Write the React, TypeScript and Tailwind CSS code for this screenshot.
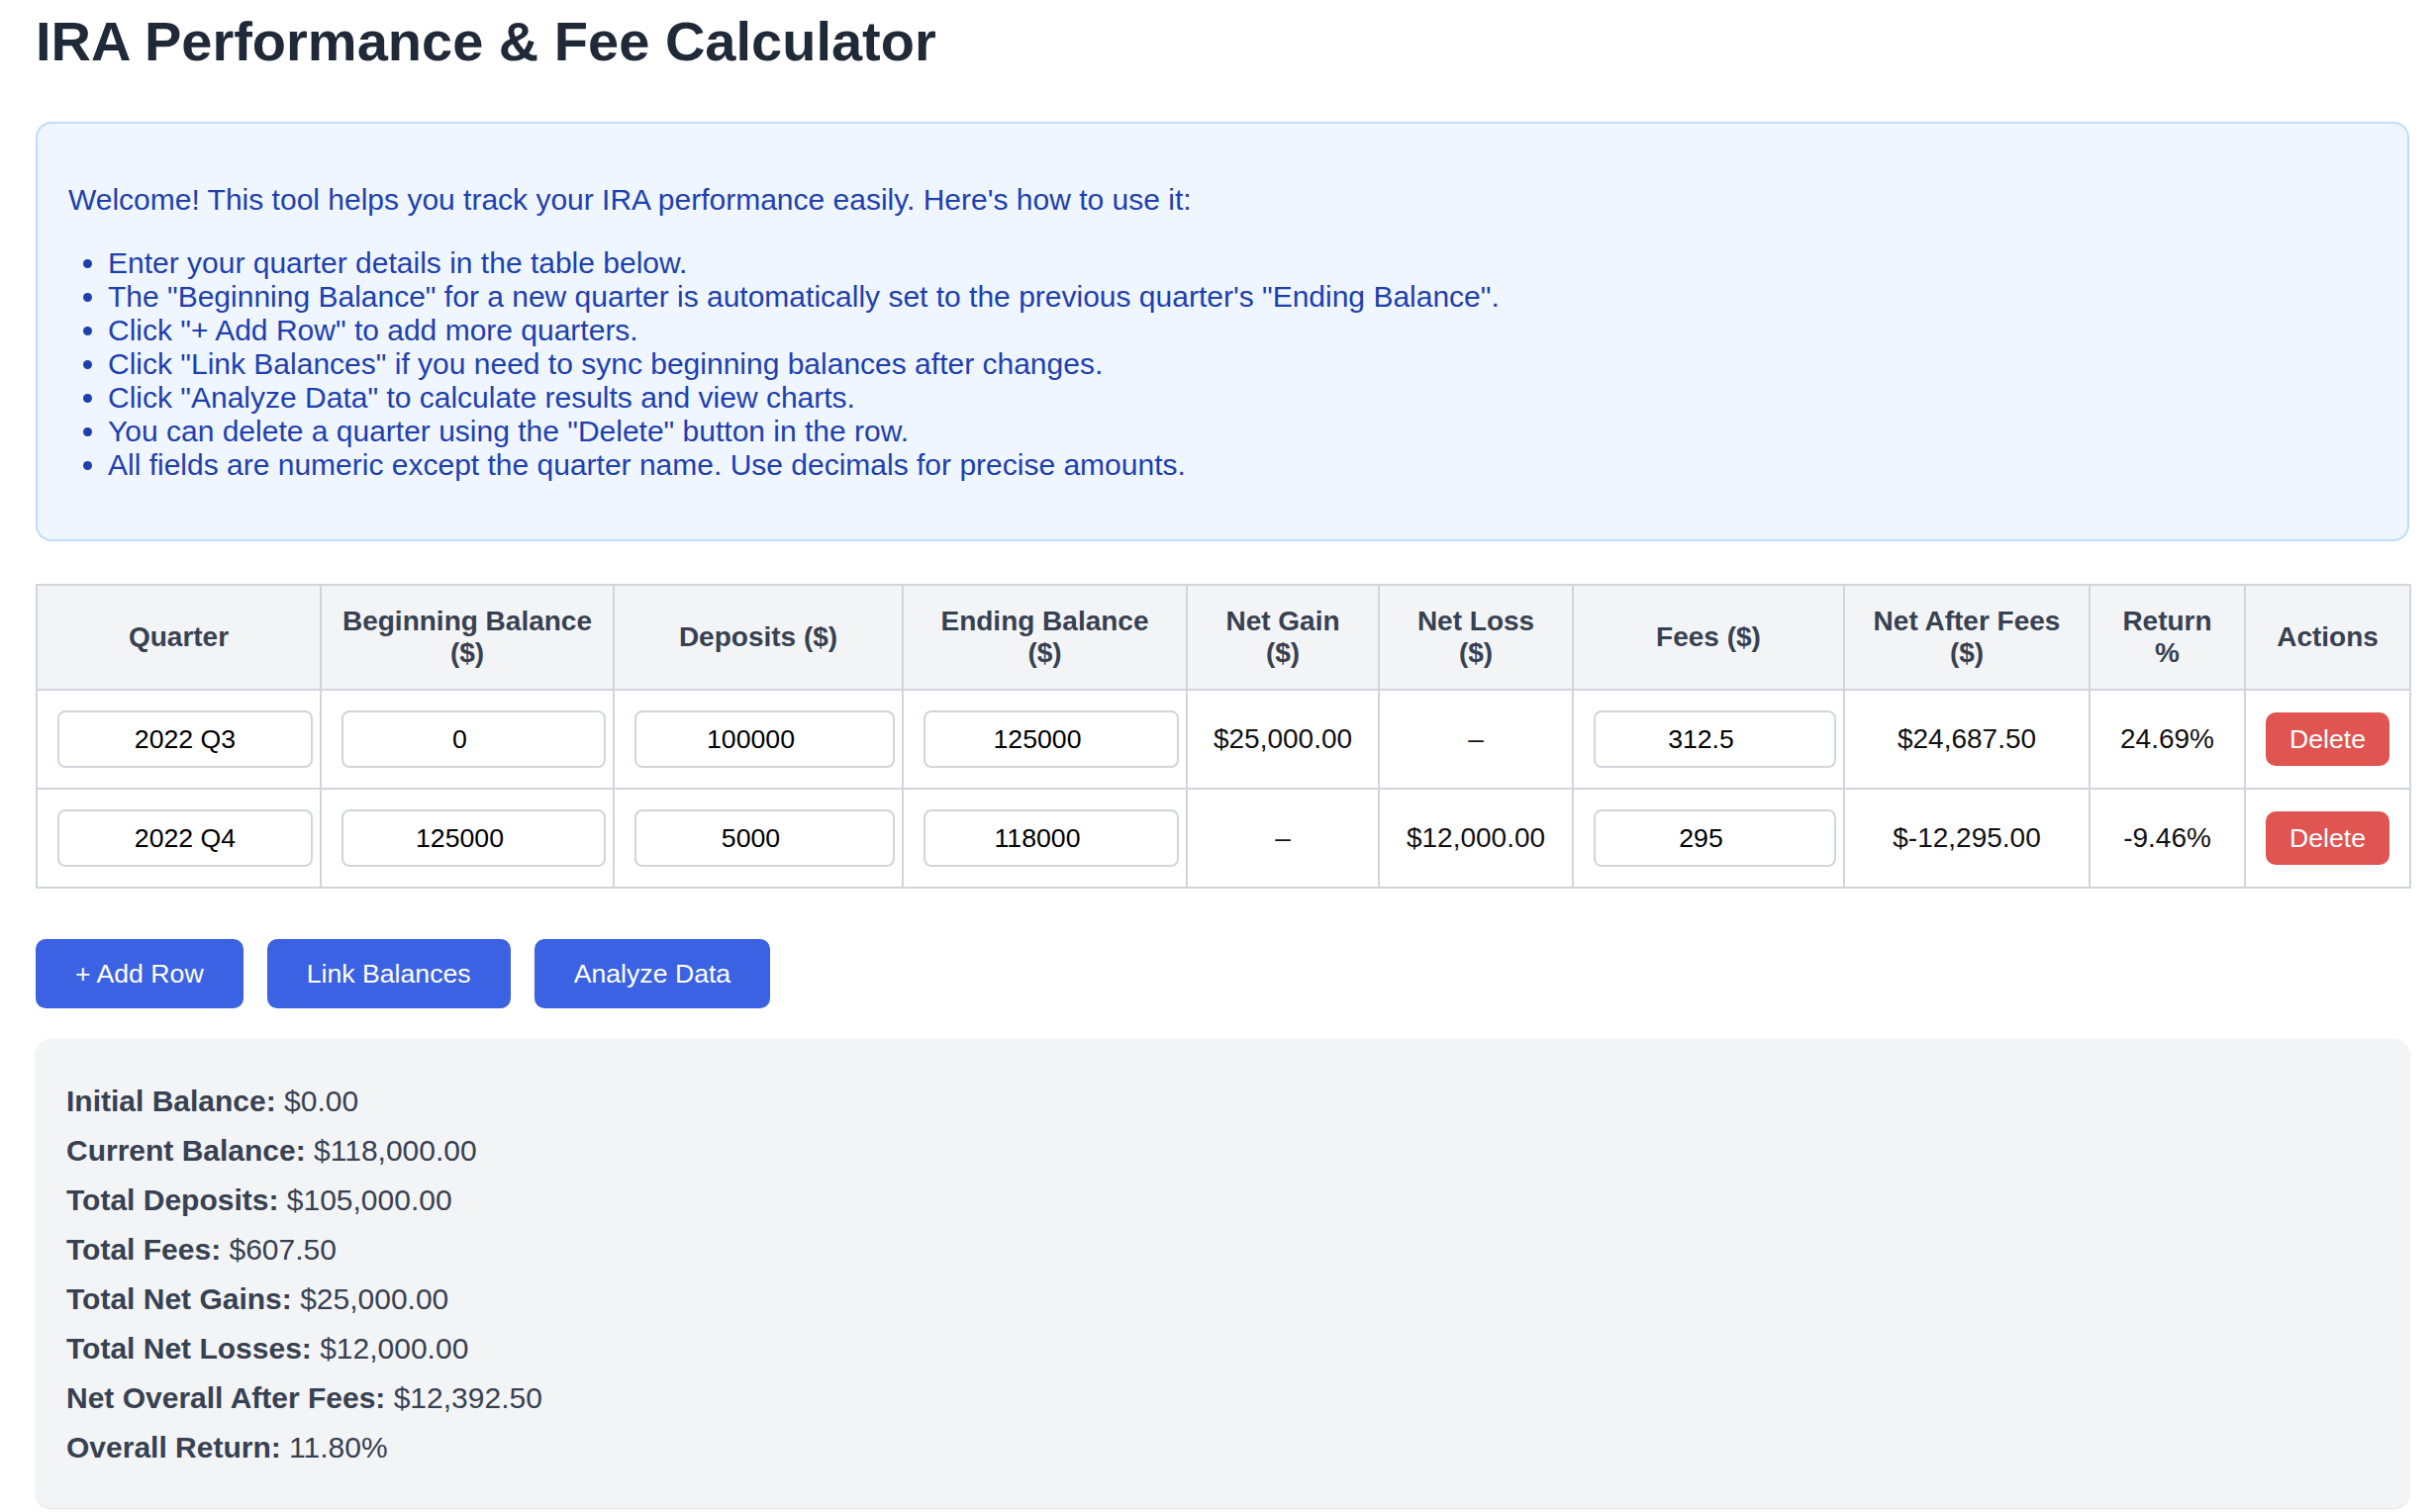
import React from 'react';

type Row = {
  quarter: string;
  begin: string;
  deposits: string;
  ending: string;
  gain: string;
  loss: string;
  fees: string;
  net: string;
  ret: string;
};

const rows: Row[] = [
  { quarter: '2022 Q3', begin: '0', deposits: '100000', ending: '125000', gain: '$25,000.00', loss: '–', fees: '312.5', net: '$24,687.50', ret: '24.69%' },
  { quarter: '2022 Q4', begin: '125000', deposits: '5000', ending: '118000', gain: '–', loss: '$12,000.00', fees: '295', net: '$-12,295.00', ret: '-9.46%' },
];

const summary = [
  ['Initial Balance:', '$0.00'],
  ['Current Balance:', '$118,000.00'],
  ['Total Deposits:', '$105,000.00'],
  ['Total Fees:', '$607.50'],
  ['Total Net Gains:', '$25,000.00'],
  ['Total Net Losses:', '$12,000.00'],
  ['Net Overall After Fees:', '$12,392.50'],
  ['Overall Return:', '11.80%'],
];

const Cell = ({ value, numeric = true }: { value: string; numeric?: boolean }) => (
  <input
    defaultValue={value}
    className={
      numeric
        ? "w-[calc(100%+13px)] h-[58px] pl-[5px] pr-[33px] border-2 border-[#d1d5db] rounded-[8px] bg-white text-center text-[26.67px] text-black font-['Liberation_Sans',Arial,sans-serif] outline-none"
        : "w-[calc(100%+13px)] h-[58px] px-[5px] border-2 border-[#d1d5db] rounded-[8px] bg-white text-center text-[26.67px] text-black font-['Liberation_Sans',Arial,sans-serif] outline-none"
    }
  />
);

const th = "border-2 border-[#d1d5db] bg-[#f3f4f6] px-[20px] py-[20px] text-[28px] leading-[32px] font-bold text-[#374151] text-center align-middle";
const td = "border-2 border-[#d1d5db] px-[20px] py-[20px] text-[28px] leading-[32px] text-[#111111] text-center align-middle";

export default function App() {
  return (
    <div className="min-h-screen bg-white pl-[36px] pr-[24px] pt-[10px] font-['Liberation_Sans',Arial,sans-serif]">
      <h1 className="text-[56px] leading-[64px] font-bold text-[#1f2937]">IRA Performance &amp; Fee Calculator</h1>

      {/* instructions */}
      <div className="mt-[49px] border-2 border-[#bfdbfe] bg-[#eff6ff] rounded-[16px] pl-[31px] pr-[32px] pt-[60px] pb-[58px] text-[30px] leading-[34px] text-[#1e40af]">
        <p>Welcome! This tool helps you track your IRA performance easily. Here's how to use it:</p>
        <ul className="mt-[30px] list-disc pl-[40px]">
          <li>Enter your quarter details in the table below.</li>
          <li>The "Beginning Balance" for a new quarter is automatically set to the previous quarter's "Ending Balance".</li>
          <li>Click "+ Add Row" to add more quarters.</li>
          <li>Click "Link Balances" if you need to sync beginning balances after changes.</li>
          <li>Click "Analyze Data" to calculate results and view charts.</li>
          <li>You can delete a quarter using the "Delete" button in the row.</li>
          <li>All fields are numeric except the quarter name. Use decimals for precise amounts.</li>
        </ul>
      </div>

      {/* table */}
      <table className="mt-[43px] w-full table-fixed border-collapse">
        <colgroup>
          <col className="w-[287px]" />
          <col className="w-[296px]" />
          <col className="w-[292px]" />
          <col className="w-[287px]" />
          <col className="w-[194px]" />
          <col className="w-[196px]" />
          <col className="w-[274px]" />
          <col className="w-[248px]" />
          <col className="w-[157px]" />
          <col className="w-[167px]" />
        </colgroup>
        <thead>
          <tr>
            <th className={th}>Quarter</th>
            <th className={th}>Beginning Balance<br />($)</th>
            <th className={th}>Deposits ($)</th>
            <th className={th}>Ending Balance<br />($)</th>
            <th className={th}>Net Gain<br />($)</th>
            <th className={th}>Net Loss<br />($)</th>
            <th className={th}>Fees ($)</th>
            <th className={th}>Net After Fees<br />($)</th>
            <th className={th}>Return<br />%</th>
            <th className={th}>Actions</th>
          </tr>
        </thead>
        <tbody>
          {rows.map((r) => (
            <tr key={r.quarter}>
              <td className={td}><Cell value={r.quarter} numeric={false} /></td>
              <td className={td}><Cell value={r.begin} /></td>
              <td className={td}><Cell value={r.deposits} /></td>
              <td className={td}><Cell value={r.ending} /></td>
              <td className={td}>{r.gain}</td>
              <td className={td}>{r.loss}</td>
              <td className={td}><Cell value={r.fees} /></td>
              <td className={td}>{r.net}</td>
              <td className={td}>{r.ret}</td>
              <td className={td}>
                <button className="bg-[#e05452] text-white text-[26.67px] leading-[30px] px-[24px] py-[12px] rounded-[10px]">Delete</button>
              </td>
            </tr>
          ))}
        </tbody>
      </table>

      {/* actions */}
      <div className="mt-[51px] flex gap-[24px]">
        <button className="bg-[#3b62e2] text-white text-[26.67px] leading-[30px] px-[40px] py-[20px] rounded-[10px]">+ Add Row</button>
        <button className="bg-[#3b62e2] text-white text-[26.67px] leading-[30px] px-[40px] py-[20px] rounded-[10px]">Link Balances</button>
        <button className="bg-[#3b62e2] text-white text-[26.67px] leading-[30px] px-[40px] py-[20px] rounded-[10px]">Analyze Data</button>
      </div>

      {/* summary */}
      <div className="mt-[31px] bg-[#f3f4f6] rounded-[16px] shadow-sm pl-[31px] pr-[30px] pt-[46px] pb-[44px] text-[30px] leading-[34px] text-[#374151] flex flex-col gap-[16px]">
        {summary.map(([label, value]) => (
          <p key={label}>
            <span className="font-bold">{label}</span> {value}
          </p>
        ))}
      </div>
    </div>
  );
}
